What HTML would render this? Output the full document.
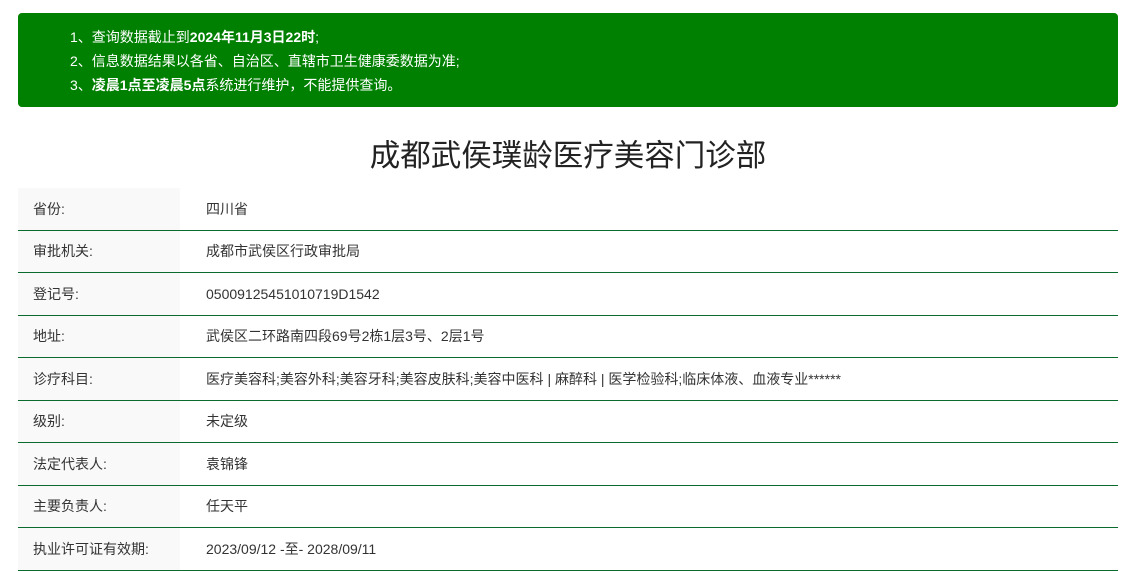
<!DOCTYPE html>
<html><head><meta charset="utf-8"><style>
body{margin:0;background:#fff;font-family:"Liberation Sans","Noto Sans CJK SC",sans-serif;width:1136px;height:566px;overflow:hidden;}
.notice{position:absolute;left:18px;top:13px;width:1100px;height:94px;background:#008000;border-radius:4px;color:#fff;font-size:14px;}
.notice div{position:absolute;left:52px;}
h1{position:absolute;top:136px;left:0;width:1136px;text-align:center;margin:0;font-weight:normal;font-size:30.5px;color:#222;line-height:40px;}
table{position:absolute;left:18px;top:188px;width:1100px;border-collapse:collapse;font-size:14px;color:#333;}
td{height:41.5px;border-bottom:1px solid #0b6b2e;padding:0;}
td.l{width:162px;background:#f9f9f9;padding-left:15px;box-sizing:border-box;}
td.v{padding-left:26px;}
</style></head><body>
<div class="notice">
<div style="top:14px">1、查询数据截止到<b>2024年11月3日22时</b>;</div>
<div style="top:38px">2、信息数据结果以各省、自治区、直辖市卫生健康委数据为准;</div>
<div style="top:62px">3、<b>凌晨1点至凌晨5点</b>系统进行维护，不能提供查询。</div>
</div>
<h1>成都武侯璞龄医疗美容门诊部</h1>
<table>
<tr><td class="l">省份:</td><td class="v">四川省</td></tr>
<tr><td class="l">审批机关:</td><td class="v">成都市武侯区行政审批局</td></tr>
<tr><td class="l">登记号:</td><td class="v">05009125451010719D1542</td></tr>
<tr><td class="l">地址:</td><td class="v">武侯区二环路南四段69号2栋1层3号、2层1号</td></tr>
<tr><td class="l">诊疗科目:</td><td class="v">医疗美容科;美容外科;美容牙科;美容皮肤科;美容中医科 | 麻醉科 | 医学检验科;临床体液、血液专业******</td></tr>
<tr><td class="l">级别:</td><td class="v">未定级</td></tr>
<tr><td class="l">法定代表人:</td><td class="v">袁锦锋</td></tr>
<tr><td class="l">主要负责人:</td><td class="v">任天平</td></tr>
<tr><td class="l">执业许可证有效期:</td><td class="v">2023/09/12 -至- 2028/09/11</td></tr>
</table>
</body></html>
